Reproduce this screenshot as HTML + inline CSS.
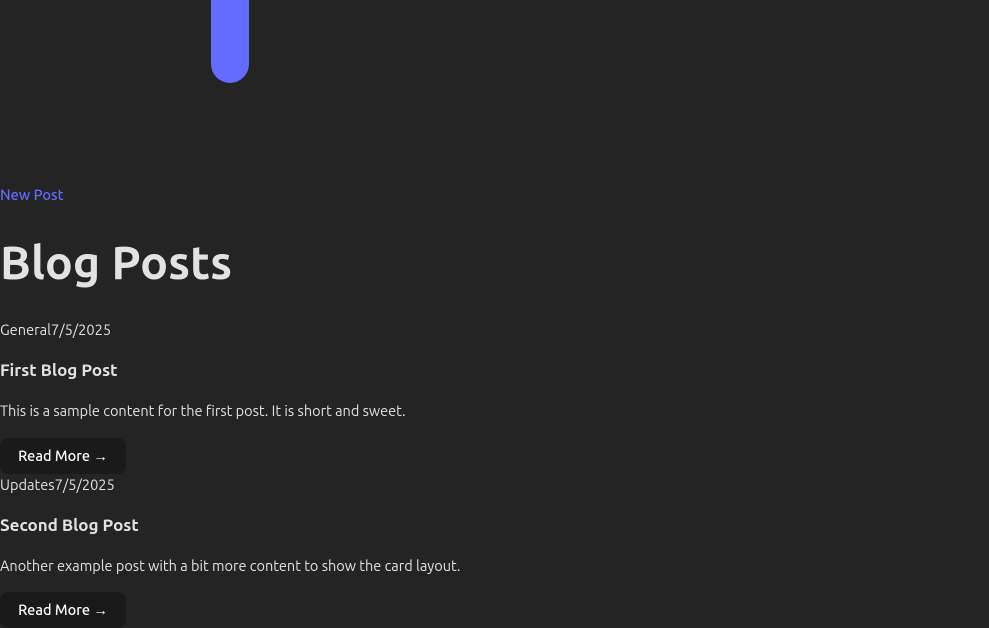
<!DOCTYPE html>
<html><head><meta charset="utf-8"><style>
html,body{margin:0;padding:0;background:#242424;width:989px;height:625px;overflow:hidden;font-family:"Ubuntu","Liberation Sans","DejaVu Sans",sans-serif;color:rgba(255,255,255,.87)}
.a{position:absolute;left:0;white-space:nowrap}
.pill{position:absolute;left:211px;top:-20px;width:38px;height:103px;background:#646cff;border-radius:0 0 19px 19px}
.np{top:186px;font-size:14.6px;color:#646cff;font-weight:500}
h1{margin:0;top:234px;font-size:46.5px;font-weight:700;line-height:56px}
.meta{font-size:14.6px;line-height:18px;font-weight:400}
h3{margin:0;font-size:17px;font-weight:700;line-height:20px}
.p{font-size:14.5px;line-height:18px;font-weight:400}
.btn{width:126px;height:36px;background:#1a1a1a;border-radius:8px;font-size:14.5px;font-weight:500;line-height:36px;text-align:center;color:#fff}
</style></head><body>
<div class="pill"></div>
<div class="a np">New Post</div>
<h1 class="a">Blog Posts</h1>
<div class="a meta" style="top:321px">General7/5/2025</div>
<h3 class="a" style="top:361px">First Blog Post</h3>
<div class="a p" style="top:402px">This is a sample content for the first post. It is short and sweet.</div>
<div class="a btn" style="top:438px">Read More →</div>
<div class="a meta" style="top:476px">Updates7/5/2025</div>
<h3 class="a" style="top:516px">Second Blog Post</h3>
<div class="a p" style="top:557px">Another example post with a bit more content to show the card layout.</div>
<div class="a btn" style="top:592px">Read More →</div>
</body></html>
